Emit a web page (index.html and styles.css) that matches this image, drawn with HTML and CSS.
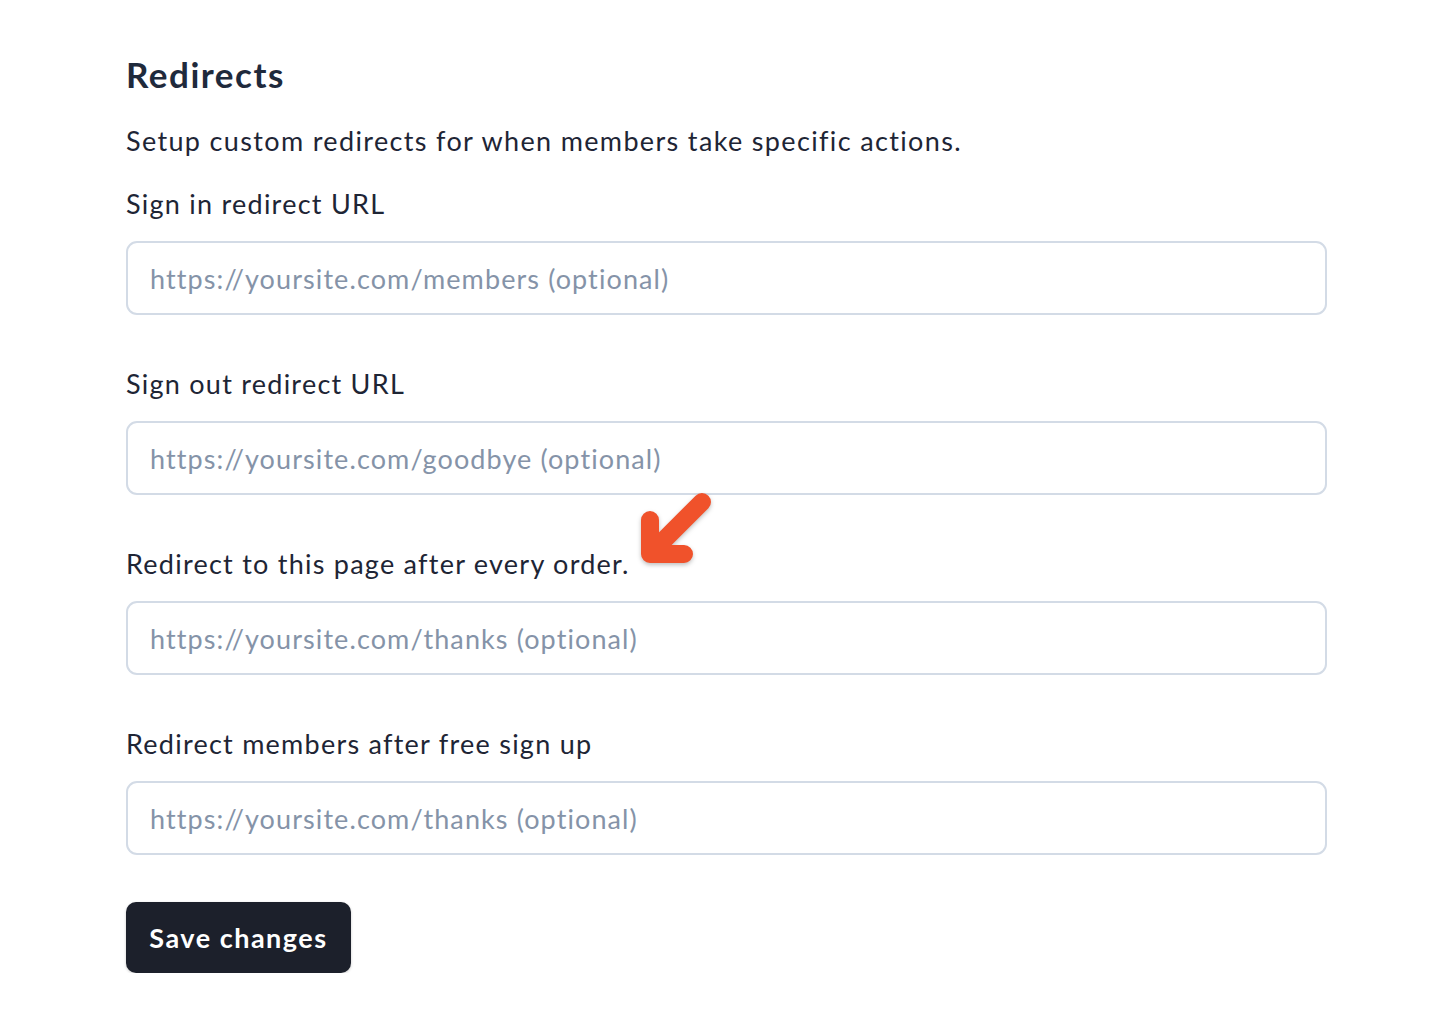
FILE: index.html
```html
<!DOCTYPE html>
<html lang="en">
<head>
<meta charset="utf-8">
<title>Redirects</title>
<link rel="stylesheet" href="styles.css">
</head>
<body>
<main class="page">
  <h1 class="title">Redirects</h1>
  <p class="desc">Setup custom redirects for when members take specific actions.</p>
  <div class="fields">
    <div class="field">
      <label class="label">Sign in redirect URL</label>
      <input class="input" type="text" placeholder="https://yoursite.com/members (optional)">
    </div>
    <div class="field">
      <label class="label">Sign out redirect URL</label>
      <input class="input" type="text" placeholder="https://yoursite.com/goodbye (optional)">
    </div>
    <div class="field field-marked">
      <label class="label">Redirect to this page after every order.</label>
      <svg class="arrow" width="90" height="90" viewBox="0 0 90 90" aria-hidden="true">
        <g fill="none" stroke="#f0522b" stroke-width="18" stroke-linecap="round" stroke-linejoin="round">
          <path d="M72 14 L24 62"/>
          <path d="M20 32 L20 66 L54 66"/>
        </g>
      </svg>
      <input class="input" type="text" placeholder="https://yoursite.com/thanks (optional)">
    </div>
    <div class="field">
      <label class="label">Redirect members after free sign up</label>
      <input class="input" type="text" placeholder="https://yoursite.com/thanks (optional)">
    </div>
  </div>
  <button class="btn" type="button">Save changes</button>
</main>
</body>
</html>
```

FILE: styles.css
```css
html, body {
  margin: 0;
  padding: 0;
  background: #ffffff;
}
body {
  font-family: Lato, "Open Sans", sans-serif;
  color: #1e2535;
}
.page {
  width: 1201px;
  padding: 54px 0 0 126px;
  display: flex;
  flex-direction: column;
  align-items: flex-start;
}
.title {
  margin: 0;
  font-size: 35px;
  line-height: 40px;
  font-weight: 700;
  color: #1f2a3c;
  letter-spacing: 1.5px;
}
.desc {
  margin: 29px 0 0 0;
  font-size: 27px;
  line-height: 36px;
  color: #1e2535;
  letter-spacing: 1.35px;
}
.fields {
  width: 100%;
  margin-top: 27px;
  display: flex;
  flex-direction: column;
  gap: 51px;
}
.field {
  display: flex;
  flex-direction: column;
  gap: 19px;
  position: relative;
}
.label {
  font-size: 27px;
  line-height: 36px;
  color: #1e2535;
  letter-spacing: 1.25px;
}
.input {
  box-sizing: border-box;
  width: 100%;
  height: 74px;
  border: 2px solid #d3dbe6;
  border-radius: 11px;
  padding: 0 22px;
  font-family: Lato, "Open Sans", sans-serif;
  font-size: 27px;
  color: #1e2535;
  background: #ffffff;
  outline: none;
  letter-spacing: 1.1px;
}
.input::placeholder {
  color: #8593a8;
}
.arrow {
  position: absolute;
  left: 504px;
  top: -58px;
  filter: drop-shadow(0 2px 2px rgba(0,0,0,0.25));
}
.btn {
  margin-top: 47px;
  width: 225px;
  height: 71px;
  border: none;
  border-radius: 10px;
  background: #1c202b;
  color: #ffffff;
  font-family: Lato, "Open Sans", sans-serif;
  font-weight: 700;
  font-size: 27px;
  letter-spacing: 1.5px;
  box-shadow: 0 1px 3px rgba(0,0,0,0.2);
}
```
